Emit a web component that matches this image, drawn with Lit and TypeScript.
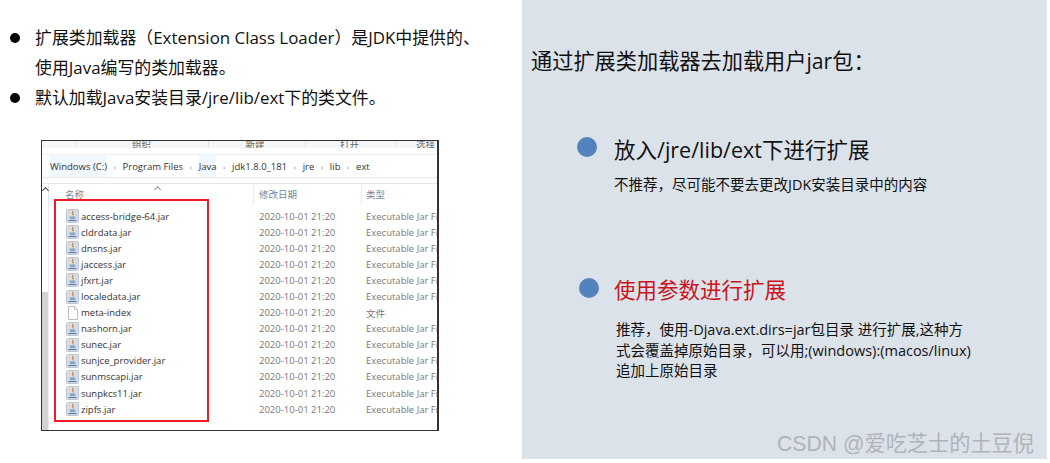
import { LitElement, html, css, svg } from "lit";
import { customElement } from "lit/decorators.js";

const files = [
  "access-bridge-64.jar", "cldrdata.jar", "dnsns.jar", "jaccess.jar", "jfxrt.jar", "localedata.jar",
  "meta-index", "nashorn.jar", "sunec.jar", "sunjce_provider.jar", "sunmscapi.jar", "sunpkcs11.jar", "zipfs.jar",
];

const jarIcon = svg`<svg class="ic" viewBox="0 0 13 14" width="13" height="14">
  <rect x="0.5" y="0.5" width="12" height="13" rx="1" fill="#d5dde6" stroke="#bcc6d2"/>
  <path d="M7 2C5.4 3.6 8.2 4.4 6.6 6.4" fill="none" stroke="#d9792b" stroke-width="1.2"/>
  <path d="M3.5 7.5h6l-.6 2.6H4.1z" fill="#8aa0bd"/>
  <path d="M2.5 11.5h8" stroke="#5f7ca8" stroke-width="1.2"/>
</svg>`;

const docIcon = svg`<svg class="ic" viewBox="0 0 13 14" width="13" height="14">
  <path d="M2.5.5h6l3 3v10h-9z" fill="#fff" stroke="#bdbdbd"/>
  <path d="M8.5.5v3h3" fill="none" stroke="#cfcfcf"/>
</svg>`;

@customElement("app-root")
export class AppRoot extends LitElement {
  static styles = css`
    :host { display: block; width: 1050px; height: 463px; background: #fff; font-family: "Open Sans", "Noto Sans CJK SC", sans-serif; overflow: hidden; }
    .page { display: flex; height: 463px; align-items: flex-start; }
    .left { width: 522px; flex: none; display: flex; flex-direction: column; }
    .bullets { margin: 0; padding: 23px 0 0 10px; list-style: none; color: #111; font-size: 16.9px; }
    .bullets li { display: flex; gap: 15px; line-height: 30px; }
    .dot { width: 10px; height: 10px; border-radius: 50%; background: #000; flex: none; margin-top: 10px; }
    .explorer {
      margin: 27px 0 0 41px; width: 398px; height: 291px; box-sizing: border-box;
      border: 1px solid #333; border-right-width: 2px; background: #fff; display: flex; flex-direction: column; overflow: hidden;
      font-size: 9.5px; color: #333;
    }
    .ribbon { display: flex; height: 7px; color: #666; font-size: 9.5px; line-height: 7px; background: #f5f6f7; overflow: hidden; flex: none; }
    .ribbon span { text-align: center; border-right: 1px solid #e2e3e5; overflow: hidden; }
    .ribbon .g0 { width: 34px; }
    .ribbon .g1 { width: 132px; padding-right: 2px; box-sizing: border-box; }
    .ribbon .g2 { width: 97px; padding-right: 4px; box-sizing: border-box; }
    .ribbon .g3 { width: 90px; padding-right: 2px; box-sizing: border-box; }
    .ribbon .g4 { flex: 1; border: 0; padding-left: 18px; }
    .crumbs { display: flex; align-items: center; height: 22px; margin-top: 6px; padding-left: 8px; border-top: 1px solid #eee; border-bottom: 1px solid #e8e8e8; font-size: 9.5px; color: #333; flex: none; }
    .crumb { height: 100%; display: flex; align-items: center; white-space: nowrap; }
    .crumb.tint { background: #f0f7fd; }
    .sep { color: #888; font-size: 8px; width: 15.6px; text-align: center; flex: none; }
    .list { flex: 1; display: flex; border-top: 1px solid #e6e6e6; margin-top: 5px; min-height: 0; }
    .rail { width: 6px; flex: none; background: linear-gradient(#fff 108px, #d2d2d2 108px); border-right: 1px solid #e8e8e8; position: relative; }
    .rail::before { content: ""; position: absolute; left: 1px; top: 4px; width: 4px; height: 4px; border-left: 1px solid #444; border-top: 1px solid #444; transform: rotate(45deg); }
    .main { flex: 1; min-width: 0; display: flex; flex-direction: column; padding-left: 5px; position: relative; }
    .caret { position: absolute; left: 106px; top: 3px; width: 4px; height: 4px; border-left: 1px solid #999; border-top: 1px solid #999; transform: rotate(45deg); }
    .head { display: flex; height: 21px; color: #7a8796; font-size: 9.5px; line-height: 22px; flex: none; }
    .head .n { width: 200px; padding-left: 11px; box-sizing: border-box; border-right: 1px solid #e8ebf0; flex: none; }
    .head .d { width: 108px; padding-left: 5px; box-sizing: border-box; border-right: 1px solid #e8ebf0; flex: none; }
    .head .t { padding-left: 4px; }
    .box { position: relative; padding: 3px 0 0; }
    .row { display: flex; height: 16.1px; align-items: center; white-space: nowrap; font-size: 9.5px; }
    .row .n { width: 200px; flex: none; display: flex; align-items: center; gap: 2px; padding-left: 12px; box-sizing: border-box; color: #333; }
    .row .d { width: 108px; flex: none; padding-left: 5px; box-sizing: border-box; color: #777; }
    .row .t { padding-left: 4px; color: #777; overflow: hidden; }
    .ic { flex: none; }
    .red { position: absolute; left: 0; top: -6px; width: 151px; height: 219px; border: 2px solid #ee1c25; pointer-events: none; }

    .right { flex: none; width: 525px; height: 459px; background: #dce2ea; display: flex; flex-direction: column; padding: 47px 0 0 9px; box-sizing: border-box; position: relative; color: #111; }
    .title { font-size: 21.2px; line-height: 27px; }
    .opt { display: grid; grid-template-columns: 20px 1fr; column-gap: 17px; }
    .opt.a { margin: 61px 0 0 46px; }
    .opt.b { margin: 80px 0 0 48px; column-gap: 15px; }
    .ball { width: 20px; height: 20px; border-radius: 50%; background: #5482bc; margin-top: 2px; }
    .opt.b .ball { margin-top: 3px; }
    .h { font-size: 21.5px; line-height: 30px; white-space: nowrap; }
    .h.warn { color: #c9141c; }
    .sub { grid-column: 2; font-size: 14.5px; line-height: 20px; white-space: nowrap; }
    .opt.a .sub { margin-top: 10px; }
    .opt.b .sub { margin: 15px 0 0 2px; line-height: 20.5px; }
    .mark { position: absolute; right: 13px; bottom: 3px; font-size: 21.2px; color: #b0b3b8; line-height: 24px; font-family: "Liberation Sans", "Noto Sans CJK SC", sans-serif; white-space: nowrap; }
  `;

  render() {
    const crumbs = [["Windows (C:)", true], ["Program Files", false], ["Java", true], ["jdk1.8.0_181", false], ["jre", false], ["lib", false], ["ext", false]] as const;
    return html`<div class="page">
      <section class="left">
        <ul class="bullets">
          <li><span class="dot"></span><span>扩展类加载器（Extension Class Loader）是JDK中提供的、<br />使用Java编写的类加载器。</span></li>
          <li><span class="dot"></span><span>默认加载Java安装目录/jre/lib/ext下的类文件。</span></li>
        </ul>
        <div class="explorer">
          <div class="ribbon">
            <span class="g0"></span><span class="g1">组织</span><span class="g2">新建</span><span class="g3">打开</span><span class="g4">选择</span>
          </div>
          <div class="crumbs">
            ${crumbs.map((c, i) => html`${i ? html`<span class="sep">›</span>` : ""}<span class="crumb ${c[1] ? "tint" : ""}">${c[0]}</span>`)}
          </div>
          <div class="list">
            <div class="rail"></div>
            <div class="main">
              <span class="caret"></span>
              <div class="head"><span class="n">名称</span><span class="d">修改日期</span><span class="t">类型</span></div>
              <div class="box">
                <div class="red"></div>
                ${files.map((f) => {
                  const jar = f.endsWith(".jar");
                  return html`<div class="row"><span class="n">${jar ? jarIcon : docIcon}${f}</span><span class="d">2020-10-01 21:20</span><span class="t">${jar ? "Executable Jar Fi" : "文件"}</span></div>`;
                })}
              </div>
            </div>
          </div>
        </div>
      </section>
      <section class="right">
        <div class="title">通过扩展类加载器去加载用户jar包：</div>
        <div class="opt a">
          <span class="ball"></span><div class="h">放入/jre/lib/ext下进行扩展</div>
          <div class="sub">不推荐，尽可能不要去更改JDK安装目录中的内容</div>
        </div>
        <div class="opt b">
          <span class="ball"></span><div class="h warn">使用参数进行扩展</div>
          <div class="sub">推荐，使用-Djava.ext.dirs=jar包目录 进行扩展,这种方<br />式会覆盖掉原始目录，可以用;(windows):(macos/linux)<br />追加上原始目录</div>
        </div>
        <div class="mark">CSDN @爱吃芝士的土豆倪</div>
      </section>
    </div>`;
  }
}
